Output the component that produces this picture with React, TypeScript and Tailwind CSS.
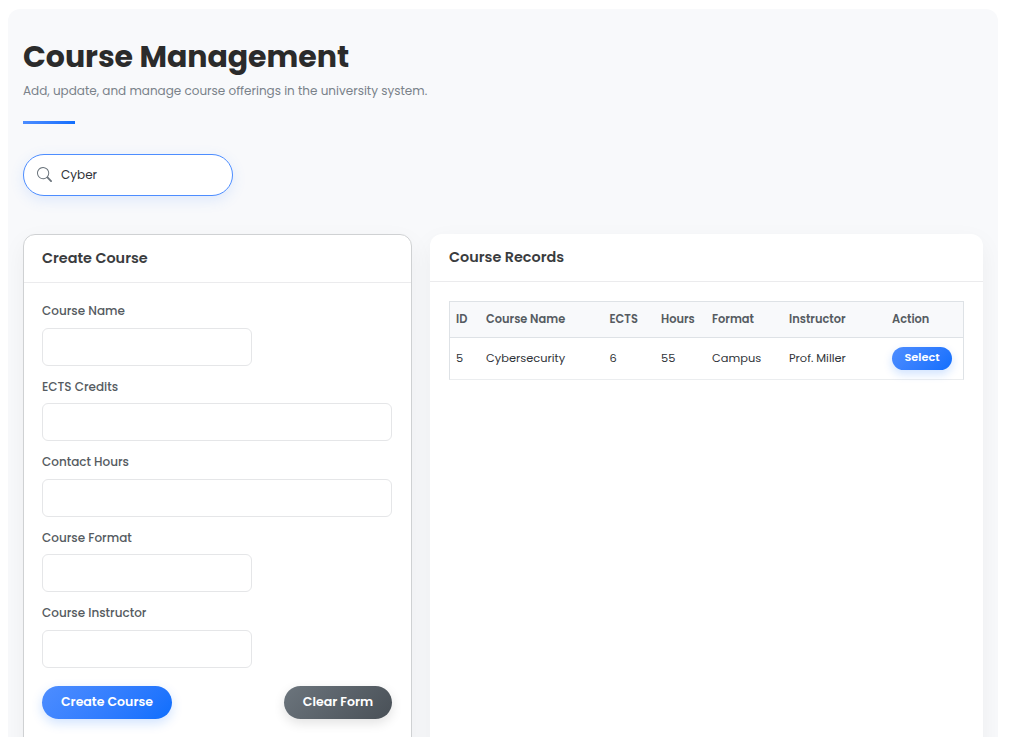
import { BsSearch } from "react-icons/bs";

const fields = [
  { label: "Course Name", box: "w-[210px]" },
  { label: "ECTS Credits", box: "w-full" },
  { label: "Contact Hours", box: "w-full" },
  { label: "Course Format", box: "w-[210px]" },
  { label: "Course Instructor", box: "w-[210px]" },
];

const columns = [
  { head: "ID", cell: "5", width: "w-[30px]" },
  { head: "Course Name", cell: "Cybersecurity", width: "w-[123.5px]" },
  { head: "ECTS", cell: "6", width: "w-[51.5px]" },
  { head: "Hours", cell: "55", width: "w-[51px]" },
  { head: "Format", cell: "Campus", width: "w-[77px]" },
  { head: "Instructor", cell: "Prof. Miller", width: "w-[103px]" },
];

export default function App() {
  return (
    <div className="h-[737px] overflow-hidden bg-white pl-2 pt-[9px] font-[Poppins,Inter,sans-serif]">
      <main className="h-[760px] w-[990px] overflow-hidden rounded-[12px] bg-[#f8f9fb] px-[15px] pt-[28px]">
        <h1 className="h-[39px] whitespace-nowrap text-[30px] font-bold leading-[39px] tracking-[-0.03px] text-[#2b2b2b]">Course Management</h1>
        <p className="mt-[5px] h-5 whitespace-nowrap text-[12px] leading-5 text-[#7a828a]">
          Add, update, and manage course offerings in the university system.
        </p>
        <div className="mt-[20px] h-[3px] w-[52px] bg-linear-135 from-[#4d8dff] to-[#0d6efd]" />
        <label className="mt-[30px] flex h-[42px] w-[210px] items-center rounded-full border border-[#4d8dff] bg-white pl-[13px] shadow-[0_4px_14px_rgba(77,141,255,0.15)]">
          <BsSearch className="mb-[2px] size-[15px] text-[#6c757d]" />
          <input className="ml-[9px] w-[140px] bg-transparent text-[12px] text-[#2f3338] outline-none" defaultValue="Cyber" />
        </label>
        <div className="mt-[38px] flex items-start gap-[18px]">
          <section className="h-[600px] w-[389px] rounded-[12px] border border-[#cfd1d3] bg-white shadow-[0_8px_24px_rgba(0,0,0,0.05)]">
            <h2 className="h-[48px] border-b border-[#ebebed] pl-[18px] text-[14.4px] font-semibold leading-[46px] text-[#3a3c3e]">Create Course</h2>
            <form className="pl-[18px] pr-[19px] pt-[18.1px]">
              <div className="flex flex-col gap-[10.7px]">
                {fields.map((f) => (
                  <div key={f.label}>
                    <label className="block h-[20.8px] whitespace-nowrap text-[12px] font-medium leading-[20px] text-[#555b61]">{f.label}</label>
                    <input className={`mt-[6px] block h-[38px] rounded-[6px] border border-[#e5e6e8] bg-white ${f.box}`} />
                  </div>
                ))}
              </div>
              <div className="mt-[18px] flex justify-between">
                <button type="button" className="h-[33px] w-[130px] whitespace-nowrap rounded-full bg-linear-135 from-[#4d8dff] to-[#0d6efd] text-[12.55px] font-semibold text-white shadow-[0_4px_12px_rgba(13,110,253,0.2)]">Create Course</button>
                <button type="button" className="h-[33px] w-[108px] whitespace-nowrap rounded-full bg-linear-135 from-[#6c757d] to-[#495057] text-[12.55px] font-semibold text-white shadow-[0_4px_12px_rgba(0,0,0,0.12)]">Clear Form</button>
              </div>
            </form>
          </section>
          <section className="h-[600px] w-[553px] rounded-[12px] bg-white shadow-[0_8px_24px_rgba(0,0,0,0.05)]">
            <h2 className="h-[48px] border-b border-[#ebebed] pl-[19px] text-[14.4px] font-semibold leading-[46px] text-[#3a3c3e]">Course Records</h2>
            <table className="ml-[19px] mt-[19px] w-[515px] table-fixed border-separate border-spacing-0 border border-b-[#ebedef] border-[#dee2e6] text-[11.4px]">
              <thead>
                <tr className="h-[36px] bg-[#f8f9fb] text-left text-[#555b61]">
                  {columns.map((c) => (
                    <th key={c.head} className={`whitespace-nowrap border-b border-[#dee2e6] p-0 pl-[6px] font-semibold ${c.width}`}>{c.head}</th>
                  ))}
                  <th className="border-b border-[#dee2e6] p-0 pl-[6px] font-semibold">Action</th>
                </tr>
              </thead>
              <tbody>
                <tr className="h-[41px] text-[#2f3338]">
                  {columns.map((c) => (
                    <td key={c.head} className="whitespace-nowrap p-0 pl-[6px]">{c.cell}</td>
                  ))}
                  <td className="p-0 pl-[6px]">
                    <button className="block h-[23px] w-[60px] rounded-full bg-linear-135 from-[#4d8dff] to-[#0d6efd] pb-[2px] text-[11.3px] font-semibold text-white shadow-[0_4px_10px_rgba(13,110,253,0.2)]">Select</button>
                  </td>
                </tr>
              </tbody>
            </table>
          </section>
        </div>
      </main>
    </div>
  );
}
